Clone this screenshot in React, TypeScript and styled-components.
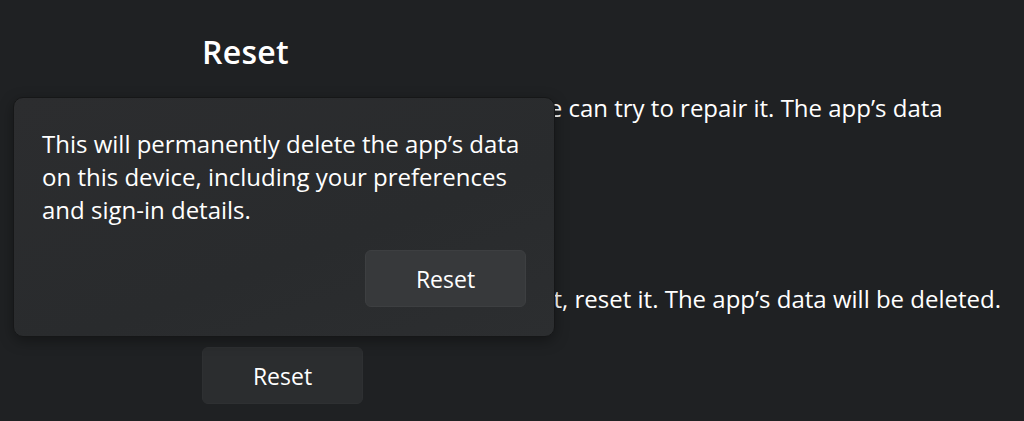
import React from "react";
import styled, { createGlobalStyle } from "styled-components";

const GlobalStyle = createGlobalStyle`
  html, body {
    margin: 0;
    padding: 0;
    background: #1f2123;
  }
  body {
    font-family: "Open Sans", "Noto Sans", sans-serif;
    color: #ffffff;
    overflow: hidden;
  }
`;

const Page = styled.div`
  position: relative;
  width: 1024px;
  height: 421px;
  background: #1f2123;
  overflow: hidden;
`;

const Content = styled.div`
  display: flex;
  flex-direction: column;
  align-items: flex-start;
  padding: 32px 0 0 202px;
  width: 822px;
`;

const Heading = styled.h2`
  margin: 0 0 19px;
  font-size: 32px;
  line-height: 40px;
  font-weight: 600;
  letter-spacing: 0.3px;
`;

const Text = styled.p`
  margin: 0;
  font-size: 24px;
  line-height: 33px;
  white-space: nowrap;
`;

const Button = styled.button<{ $raised?: boolean }>`
  width: 161px;
  height: 57px;
  border-radius: 6px;
  border: 1px solid ${({ $raised }) => ($raised ? "#3d3f41" : "#2e3032")};
  background: ${({ $raised }) => ($raised ? "#37393b" : "#2b2d2f")};
  color: #ffffff;
  font-family: inherit;
  font-size: 23px;
  padding: 0;
`;

const Section = styled.div`
  display: flex;
  flex-direction: column;
  align-items: flex-start;
  gap: 32px;
  margin-bottom: 36px;
`;

const Flyout = styled.div`
  position: absolute;
  left: 13px;
  top: 97px;
  width: 542px;
  height: 240px;
  box-sizing: border-box;
  padding: 29px 28px 29px 28px;
  display: flex;
  flex-direction: column;
  justify-content: space-between;
  background: linear-gradient(160deg, #2c2d2f 0%, #292b2d 60%, #2c2e30 100%);
  border: 1px solid #161718;
  border-radius: 10px;
  box-shadow: 0 4px 14px rgba(0, 0, 0, 0.35);
`;

const FlyoutActions = styled.div`
  display: flex;
  justify-content: flex-end;
`;

export default function App() {
  return (
    <Page>
      <GlobalStyle />
      <Content>
        <Heading>Reset</Heading>
        <Section>
          <Text>
            If this app isn’t working right, we can try to repair it. The app’s data
            <br />
            won’t be affected.
          </Text>
          <Button>Repair</Button>
        </Section>
        <Section>
          <Text>If this app still isn’t working right, reset it. The app’s data will be deleted.</Text>
          <Button>Reset</Button>
        </Section>
      </Content>
      <Flyout>
        <Text>
          This will permanently delete the app’s data
          <br />
          on this device, including your preferences
          <br />
          and sign-in details.
        </Text>
        <FlyoutActions>
          <Button $raised>Reset</Button>
        </FlyoutActions>
      </Flyout>
    </Page>
  );
}
